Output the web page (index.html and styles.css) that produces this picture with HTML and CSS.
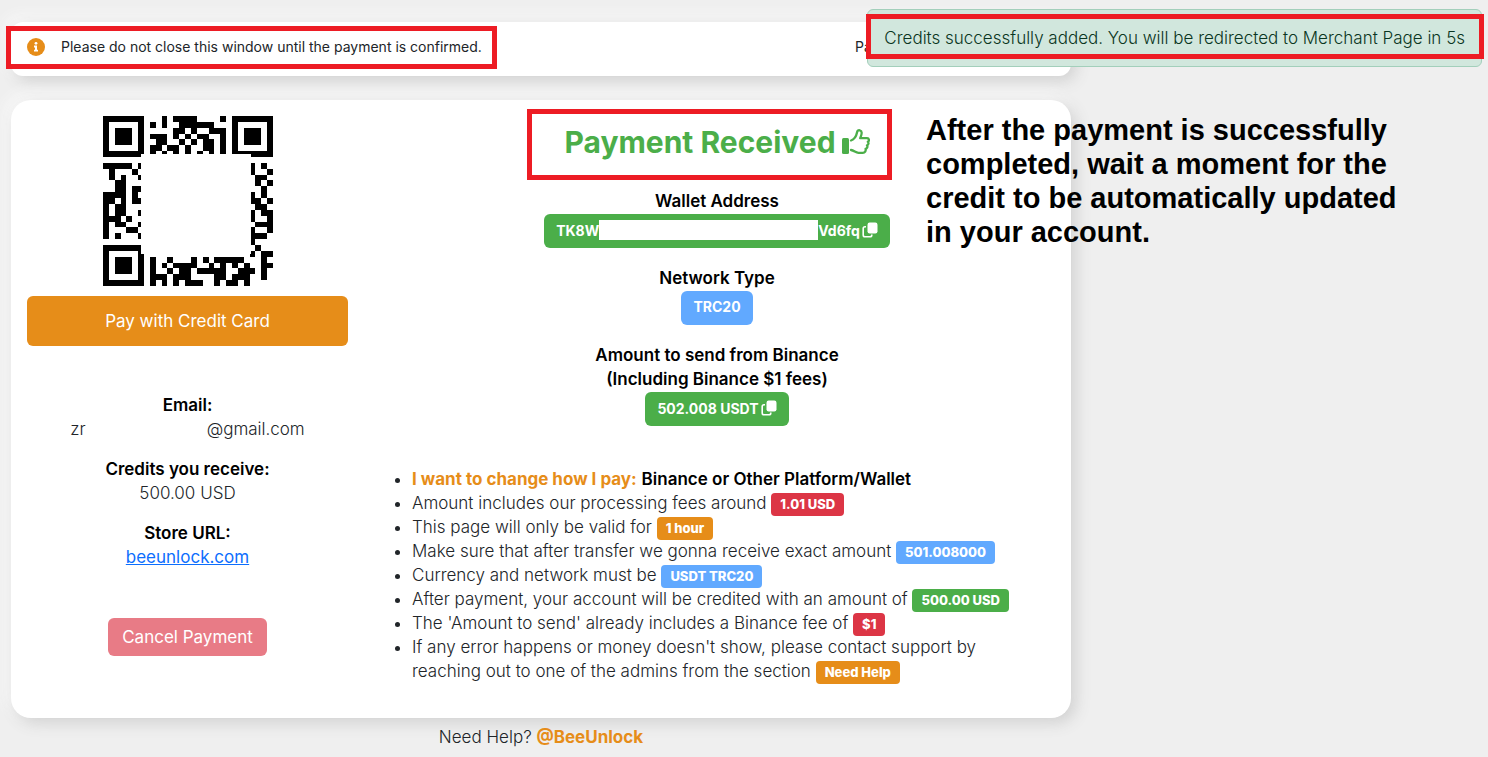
FILE: index.html
```
<!DOCTYPE html>
<html lang="en">
<head>
  <meta charset="UTF-8">
  <meta name="viewport" content="width=device-width, initial-scale=1.0">
  <title>Payment Received</title>
  <link rel="stylesheet" href="styles.css">
</head>
<body>
  <svg class="sprite" aria-hidden="true">
    <symbol id="icon-copy" viewBox="0 0 16 16">
      <rect x="5.5" y="0.5" width="10" height="11" rx="2.2" fill="currentColor"/>
      <path d="M4 4.8H3a1.8 1.8 0 0 0-1.8 1.8v6.4a1.8 1.8 0 0 0 1.8 1.8h5a1.8 1.8 0 0 0 1.8-1.8V12.5" fill="none" stroke="currentColor" stroke-width="1.6"/>
    </symbol>
  </svg>

  <div class="container">
    <header class="notice">
      <svg class="info-icon" viewBox="0 0 18 18" aria-hidden="true">
        <circle cx="9" cy="9" r="9" fill="#e68d19"/>
        <circle cx="9" cy="5.3" r="1.4" fill="#fff"/>
        <path d="M7 7.6h3v4.2h1v1.8H7v-1.8h1V9.4H7z" fill="#fff"/>
      </svg>
      <span>Please do not close this window until the payment is confirmed.</span>
      <span class="notice-end">Pa</span>
    </header>

    <main class="card">
      <section class="side">
        <svg class="qr" id="qr" viewBox="0 0 29 29" shape-rendering="crispEdges" role="img" aria-label="QR code"></svg>
        <button class="btn btn-pay" type="button">Pay with Credit Card</button>
        <dl class="details">
          <dt>Email:</dt>
          <dd>zr<span class="email-gap"></span>@gmail.com</dd>
          <dt>Credits you receive:</dt>
          <dd>500.00 USD</dd>
          <dt>Store URL:</dt>
          <dd><a href="#">beeunlock.com</a></dd>
        </dl>
        <button class="btn btn-cancel" type="button">Cancel Payment</button>
      </section>

      <section class="info">
        <h1 class="title">Payment Received
          <svg class="thumb" viewBox="0 0 28 26" aria-hidden="true">
            <rect x="0" y="9" width="7" height="16" rx="1.5" fill="currentColor"/>
            <path d="M9 11.5C12.5 10.3 14.3 7 15 3.5C15.4 1.4 16.5 .9 17.8 1.3C20.3 2 20.2 4.5 18.2 9.2H25C27.3 9.2 27.5 12 25.8 12.8C27 14 26.5 15.8 25 16.3C26 17.8 25 19.5 23.6 19.9C24.1 21.8 23 23.8 20.8 23.8H16.5C13.6 23.8 12.3 21.5 9 21" fill="none" stroke="currentColor" stroke-width="2.3" stroke-linejoin="round" stroke-linecap="round"/>
          </svg>
        </h1>

        <h2 class="label">Wallet Address</h2>
        <button class="tag green" type="button" aria-label="Copy wallet address">TK8W<span class="wallet-gap"></span>Vd6fq<svg class="copy"><use href="#icon-copy"/></svg></button>

        <h2 class="label">Network Type</h2>
        <span class="tag blue">TRC20</span>

        <h2 class="label">Amount to send from Binance<br>(Including Binance $1 fees)</h2>
        <button class="tag green" type="button" aria-label="Copy amount">502.008 USDT<svg class="copy"><use href="#icon-copy"/></svg></button>

        <ul class="notes">
          <li><a class="change" href="#">I want to change how I pay:</a> <strong>Binance or Other Platform/Wallet</strong></li>
          <li>Amount includes our processing fees around <span class="badge red">1.01 USD</span></li>
          <li>This page will only be valid for <span class="badge orange">1 hour</span></li>
          <li>Make sure that after transfer we gonna receive exact amount <span class="badge blue">501.008000</span></li>
          <li>Currency and network must be <span class="badge blue">USDT TRC20</span></li>
          <li>After payment, your account will be credited with an amount of <span class="badge green">500.00 USD</span></li>
          <li>The 'Amount to send' already includes a Binance fee of <span class="badge red">$1</span></li>
          <li>If any error happens or money doesn't show, please contact support by<br>reaching out to one of the admins from the section <span class="badge orange">Need Help</span></li>
        </ul>
      </section>
    </main>

    <footer class="footer">Need Help? <a class="change" href="#">@BeeUnlock</a></footer>
  </div>

  <div class="alert" role="alert">Credits successfully added. You will be redirected to Merchant Page in 5s</div>

  <div class="frame frame-notice"></div>
  <div class="frame frame-alert"></div>
  <div class="frame frame-title"></div>
  <p class="caption">After the payment is successfully<br>completed, wait a moment for the<br>credit to be automatically updated<br>in your account.</p>

  <script>
    const rows = [
      "11111110001011110000101111111",
      "10000010101001111110001000001",
      "10111010000011010011101011101",
      "10111010111010101100101011101",
      "10111010011001010110101011101",
      "10000010110110100110101000001",
      "11111110101010101010101111111",
      "00000000000000000000000000000",
      "11111010000000000000000001010",
      "01000100000000000000000001001",
      "01010010000000000000000000110",
      "00110000000000000000000000101",
      "00110110000000000000000000010",
      "11110100000000000000000001010",
      "11010110000000000000000001101",
      "10110000000000000000000000110",
      "10110010000000000000000001011",
      "11101000000000000000000001001",
      "10110010000000000000000000111",
      "10001100000000000000000001001",
      "10100010000000000000000001110",
      "00000000000000000000000001000",
      "11111110000000000000000000100",
      "10000010000000000000000001011",
      "10111010100100010101111100010",
      "10111010101011110010101010011",
      "10111010100101101111100111010",
      "10000010111011100001101110010",
      "11111110101010111001011010000"
    ];
    let d = "";
    rows.forEach((row, y) => {
      for (let x = 0; x < row.length; x++) {
        if (row[x] === "1") d += `M${x} ${y}h1v1h-1z`;
      }
    });
    document.getElementById("qr").innerHTML =
      `<path d="${d}"/><rect x="6.4" y="6.4" width="18.8" height="17.2" fill="#fff"/>`;
  </script>
</body>
</html>
```
FILE: styles.css
```
* {
  box-sizing: border-box;
}
body {
  margin: 0;
  padding: 22px 11px 0;
  background-color: #efefef;
  color: #212529;
  font-family: Inter, "Open Sans", sans-serif;
  font-size: 17px;
  font-weight: 300;
  line-height: 24px;
  position: relative;
}
.sprite {
  display: none;
}
.container {
  max-width: 1060px;
}
.notice, .card {
  background-color: white;
  box-shadow: 5px 5px 15px #d1d1d1, -5px -5px 15px #fafafa;
}
.notice {
  display: flex;
  align-items: center;
  gap: 16px;
  height: 54px;
  padding: 0 16px 4px;
  border-radius: 12px;
  font-size: 14px;
  font-weight: 400;
}
.info-icon {
  width: 18px;
  height: 18px;
}
.notice-end {
  width: 200px;
  margin-left: auto;
}
.card {
  display: grid;
  grid-template-columns: 321fr 690fr;
  gap: 24px;
  margin-top: 24px;
  padding: 16px 9px 35px 16px;
  border-radius: 20px;
}
.side, .info {
  display: flex;
  flex-direction: column;
  align-items: center;
  text-align: center;
}
.qr {
  width: 170px;
  height: 170px;
}
.btn {
  border: none;
  border-radius: 6px;
  color: white;
  font-family: inherit;
  font-size: 17px;
  font-weight: 400;
  cursor: pointer;
}
.btn-pay {
  width: 100%;
  height: 50px;
  margin-top: 10px;
  background-color: #e68d19;
}
.btn-cancel {
  height: 38px;
  padding: 0 14px;
  background-color: #e87b86;
}
.details {
  margin: 47px 0 33px;
}
dt, strong {
  color: black;
  font-weight: 600;
}
dd {
  margin: 0 0 16px;
}
dd a {
  color: #0d6efd;
  font-weight: 400;
}
.email-gap {
  display: inline-block;
  width: 121px;
}
.title {
  display: flex;
  align-items: center;
  gap: 6px;
  margin: 8px 0 29px;
  color: #4bae49;
  font-size: 30px;
  font-weight: 700;
  line-height: 36px;
}
.thumb {
  width: 28px;
  height: 26px;
}
.label {
  margin: 0 0 1px;
  color: black;
  font-size: 17px;
  font-weight: 600;
}
.tag {
  display: flex;
  align-items: center;
  height: 34px;
  margin-bottom: 18px;
  padding: 0 12px 2px;
  border: none;
  border-radius: 6px;
  color: white;
  font-family: inherit;
  font-size: 14px;
  font-weight: 700;
}
.copy {
  width: 16px;
  height: 16px;
  margin-left: 2px;
}
.wallet-gap {
  width: 219px;
  height: 20px;
  background-color: white;
}
.notes {
  align-self: stretch;
  margin: 23px 0 0;
  padding-left: 40px;
  text-align: left;
}
.badge {
  display: inline-block;
  margin: -2px 0;
  padding: 4px 9px 5px;
  border-radius: 4px;
  color: white;
  font-size: 13px;
  font-weight: 800;
  line-height: 14px;
  vertical-align: middle;
}
.green { background-color: #4bae49; }
.blue { background-color: #61a9ff; }
.red { background-color: #dc3545; }
.orange { background-color: #e68d19; }
.change {
  color: #e68d19;
  font-weight: 700;
  text-decoration: none;
}
.footer {
  margin-top: 7px;
  text-align: center;
}
.alert {
  position: absolute;
  top: 9px;
  right: 6px;
  padding: 16px;
  border: 1px solid #a3cfbb;
  border-radius: 6px;
  background-color: #d1e7dd;
  color: #0a3622;
}
/* highlights drawn over the page */
.frame {
  position: absolute;
  border: 5px solid #ed1c24;
}
.frame-notice {
  top: 26px;
  left: 6px;
  width: 491px;
  height: 43px;
}
.frame-alert {
  top: 14px;
  right: 4px;
  width: 618px;
  height: 45px;
}
.frame-title {
  top: 109px;
  left: 527px;
  width: 365px;
  height: 71px;
}
.caption {
  position: absolute;
  top: 113px;
  left: 926px;
  margin: 0;
  color: black;
  font-family: "Liberation Sans", Arial, sans-serif;
  font-size: 29px;
  font-weight: 700;
  line-height: 34px;
}
```
